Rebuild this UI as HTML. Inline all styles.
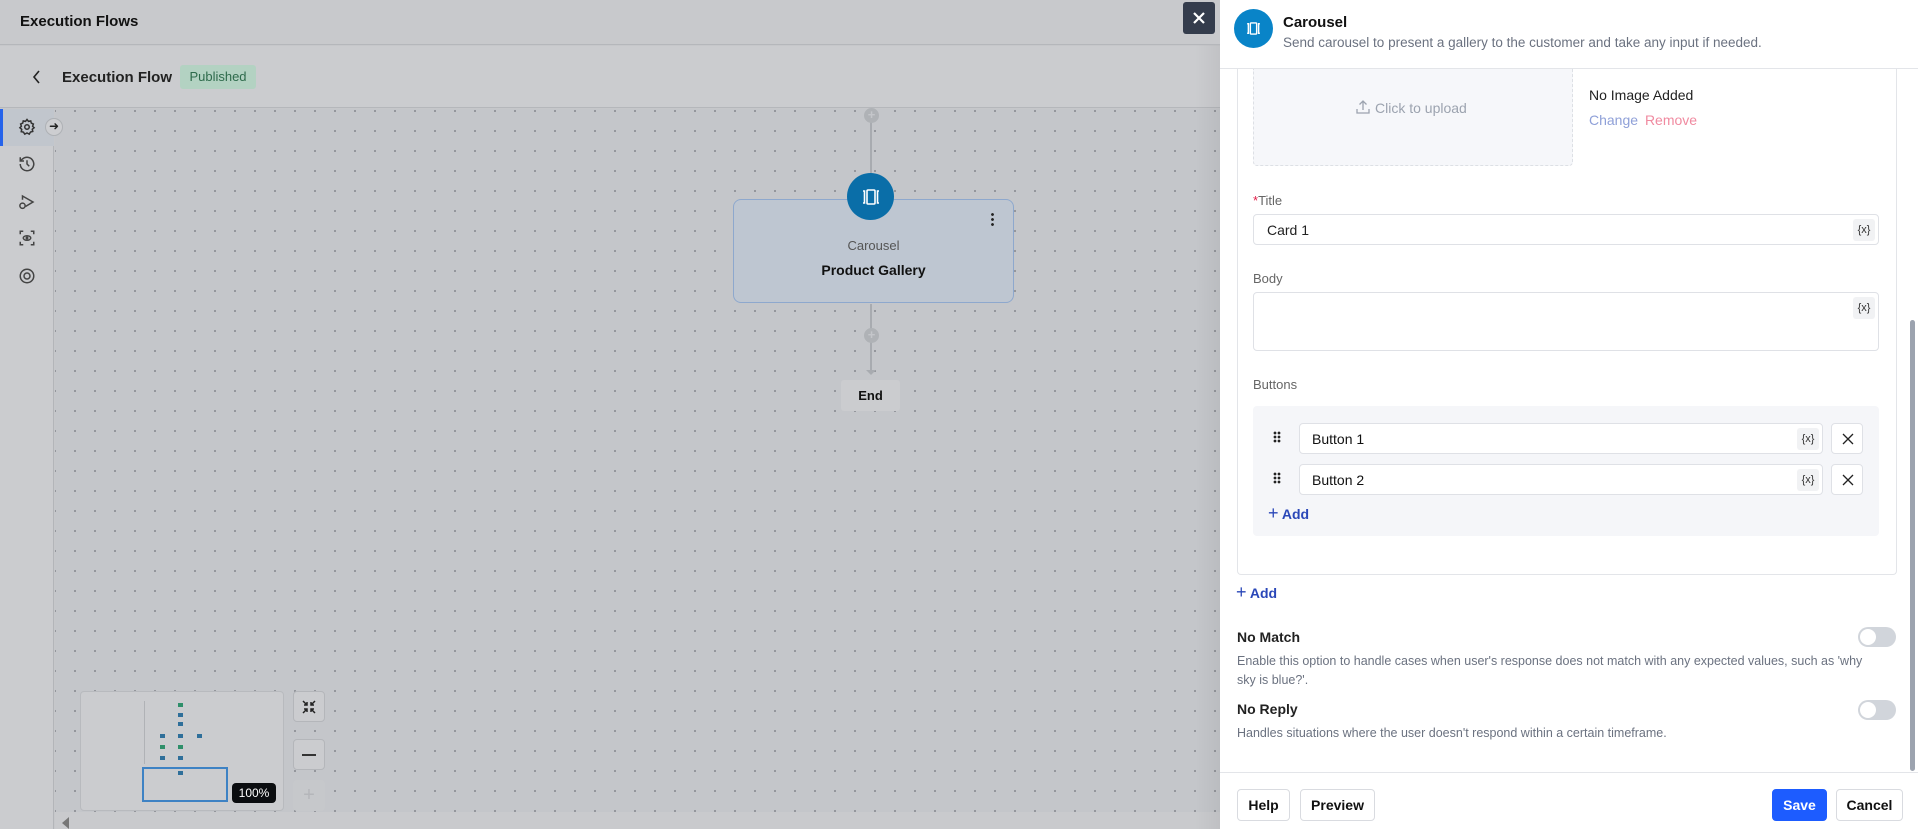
<!DOCTYPE html>
<html><head><meta charset="utf-8"><style>
*{box-sizing:border-box;margin:0;padding:0}
body{width:1918px;height:829px;overflow:hidden;font-family:"Liberation Sans",sans-serif;background:#c6c7ca;position:relative;color:#111}
.a{position:absolute}
.hdr{left:0;top:0;width:1220px;height:45px;background:#c8c9cc;border-bottom:1px solid #b5b7bb}
.bar{left:0;top:46px;width:1220px;height:62px;background:#cbcccf;border-bottom:1px solid #b5b7bb}
.side{left:0;top:109px;width:54px;height:720px;background:#cbcccf;border-right:1px solid #b3b5b9}
.canvas{left:55px;top:109px;width:1165px;height:703px;background-color:#c4c6ca;background-image:radial-gradient(circle,#8a8d93 0.8px,transparent 1.2px);background-size:20px 20px;background-position:10px -8px}
.panel{left:1220px;top:0;width:698px;height:829px;background:#fff}
.inp{border:1px solid #dfe1e6;border-radius:4px;background:#fff}
.vx{width:22px;height:22px;background:#f1f2f4;border-radius:3px;font-size:11px;text-align:center;line-height:22px;color:#333}
.btn{border:1px solid #d9dbe0;border-radius:4px;background:#fff;font-size:14px;font-weight:bold;text-align:center;line-height:30px;color:#111}
.tg{width:38px;height:20px;border-radius:10px;background:#d1d5db}
.tg:after{content:"";position:absolute;left:2px;top:2px;width:16px;height:16px;border-radius:50%;background:#fff}
.lbl{font-size:13px;color:#666}
.md{position:absolute;width:5px;height:4px;background:#2f6f9a}
</style></head><body>
<div class="a hdr"><div class="a" style="left:20px;top:13px;font-size:15px;font-weight:bold;color:#111">Execution Flows</div></div>
<div class="a bar">
 <svg class="a" style="left:31px;top:23px" width="12" height="16" viewBox="0 0 12 16"><path d="M8 2L3 8l5 6" stroke="#222" stroke-width="1.6" fill="none"/></svg>
 <div class="a" style="left:62px;top:23px;font-size:15px;font-weight:bold;color:#222">Execution Flow</div>
 <div class="a" style="left:180px;top:19px;width:76px;height:24px;background:#b3d2c2;border-radius:3px;font-size:13px;color:#2e6b4c;text-align:center;line-height:23px">Published</div>
</div>
<div class="a side">
 <div class="a" style="left:0;top:0;width:54px;height:37px;background:#c1c6cd;border-left:3px solid #2563eb"></div>
 <svg class="a" style="left:18px;top:9px" width="18" height="18" viewBox="0 0 24 24" fill="none" stroke="#333" stroke-width="2"><circle cx="12" cy="12" r="3"/><path d="M12 2l2 2.5 3-.7.7 3L20.5 8 19.5 11l2 2-2.5 2 .7 3-3 .7L15 21.5 12 20l-3 1.5-1.7-2.6-3-.7.7-3L2.5 13l2-2-1-3 2.8-1.2.7-3 3 .7z"/></svg>
 <svg class="a" style="left:18px;top:46px" width="18" height="18" viewBox="0 0 24 24" fill="none" stroke="#444" stroke-width="2"><path d="M3 12a9 9 0 1 0 3-6.7L3 8M3 3v5h5M12 7v5l3 3"/></svg>
 <svg class="a" style="left:18px;top:84px" width="18" height="18" viewBox="0 0 24 24" fill="none" stroke="#444" stroke-width="2"><path d="M6 9V4l14 8-10 6"/><circle cx="6" cy="17" r="3.5"/></svg>
 <svg class="a" style="left:18px;top:120px" width="18" height="18" viewBox="0 0 24 24" fill="none" stroke="#444" stroke-width="2"><path d="M3 7V3h4M17 3h4v4M21 17v4h-4M7 21H3v-4"/><ellipse cx="12" cy="12" rx="5" ry="3"/><circle cx="12" cy="12" r="1"/></svg>
 <svg class="a" style="left:18px;top:158px" width="18" height="18" viewBox="0 0 24 24" fill="none" stroke="#444" stroke-width="2"><circle cx="12" cy="12" r="9"/><circle cx="12" cy="12" r="4"/></svg>
</div>
<div class="a canvas"></div>
<div class="a" style="left:45px;top:118px;width:18px;height:18px;border-radius:50%;background:#cdced1;border:1px solid #aeb1b5;font-size:12px;line-height:15px;text-align:center;color:#222">➜</div>
<!-- flow -->
<div class="a" style="left:870px;top:109px;width:2px;height:65px;background:#a8abb0"></div>
<div class="a" style="left:864px;top:108px;width:15px;height:15px;border-radius:50%;background:#afb2b6;color:#c4c6ca;font-size:13px;line-height:14px;text-align:center;font-weight:bold">+</div>
<div class="a" style="left:733px;top:199px;width:281px;height:104px;background:#bec6d1;border:1.5px solid #8ea8cd;border-radius:8px"></div>
<div class="a" style="left:847px;top:173px;width:47px;height:47px;border-radius:50%;background:#0a6ea8"></div>
<svg class="a" style="left:859px;top:185px" width="24" height="24" viewBox="0 0 24 24" fill="none" stroke="#fff" stroke-width="1.6"><rect x="8" y="5" width="8" height="14" rx="1"/><path d="M4 6h1.5v12H4M20 6h-1.5v12H20"/></svg>
<div class="a" style="left:991px;top:212px;width:3px;height:14px;background:radial-gradient(circle,#222 1.2px,transparent 1.6px);background-size:3px 5px"></div>
<div class="a" style="left:733px;top:238px;width:281px;text-align:center;font-size:13px;color:#555">Carousel</div>
<div class="a" style="left:733px;top:262px;width:281px;text-align:center;font-size:14px;font-weight:bold;color:#111">Product Gallery</div>
<div class="a" style="left:870px;top:304px;width:2px;height:70px;background:#a8abb0"></div>
<div class="a" style="left:864px;top:328px;width:15px;height:15px;border-radius:50%;background:#afb2b6;color:#c4c6ca;font-size:13px;line-height:14px;text-align:center;font-weight:bold">+</div>
<div class="a" style="left:866px;top:370px;width:0;height:0;border-left:5px solid transparent;border-right:5px solid transparent;border-top:5px solid #a8abb0"></div>
<div class="a" style="left:841px;top:380px;width:59px;height:31px;background:#cbcccf;border-radius:3px;font-size:13px;font-weight:bold;text-align:center;line-height:31px">End</div>
<!-- minimap -->
<div class="a" style="left:80px;top:691px;width:204px;height:120px;background:#cbcccf;border:1px solid #b8babe;border-radius:4px"></div>
<div class="a" style="left:144px;top:701px;width:1px;height:63px;background:#b0b2b6"></div>
<div class="md" style="left:178px;top:703px;background:#2f8f6a"></div>
<div class="md" style="left:178px;top:713px"></div>
<div class="md" style="left:178px;top:722px"></div>
<div class="md" style="left:160px;top:734px"></div><div class="md" style="left:178px;top:734px"></div><div class="md" style="left:197px;top:734px"></div>
<div class="md" style="left:160px;top:745px;background:#2f8f6a"></div><div class="md" style="left:178px;top:745px;background:#2f8f6a"></div>
<div class="md" style="left:160px;top:756px"></div><div class="md" style="left:178px;top:756px"></div>
<div class="md" style="left:178px;top:771px"></div>
<div class="a" style="left:142px;top:767px;width:86px;height:35px;border:2px solid #3e82c4"></div>
<div class="a" style="left:232px;top:783px;width:44px;height:20px;background:#0b0d10;border-radius:4px;color:#fff;font-size:12px;text-align:center;line-height:20px">100%</div>
<div class="a" style="left:293px;top:691px;width:32px;height:31px;background:#cbcccf;border:1px solid #b4b6ba;border-radius:4px"><svg class="a" style="left:7px;top:7px" width="16" height="16" viewBox="0 0 16 16" stroke="#222" stroke-width="1.5" fill="none"><path d="M2 2l4 4M6 3v3H3M14 2l-4 4M10 3v3h3M2 14l4-4M3 10h3v3M14 14l-4-4M13 10h-3v3"/></svg></div>
<div class="a" style="left:293px;top:739px;width:32px;height:31px;background:#cbcccf;border:1px solid #b4b6ba;border-radius:4px"><div class="a" style="left:8px;top:14px;width:14px;height:2px;background:#333"></div></div>
<div class="a" style="left:293px;top:780px;width:32px;height:31px;background:#c6c8cb;border-radius:4px;font-size:20px;color:#b4b6ba;text-align:center;line-height:30px">+</div>
<div class="a" style="left:55px;top:812px;width:1165px;height:17px;background:#c9cacd"></div>
<div class="a" style="left:62px;top:817px;width:0;height:0;border-top:6px solid transparent;border-bottom:6px solid transparent;border-right:7px solid #777"></div>
<div class="a" style="left:1195px;top:45px;width:25px;height:784px;background:linear-gradient(90deg,rgba(0,0,0,0),rgba(0,0,0,0.05))"></div>
<!-- close -->
<div class="a" style="left:1183px;top:2px;width:32px;height:32px;background:#343c4c;border-radius:3px"><svg class="a" style="left:10px;top:10px" width="12" height="12" viewBox="0 0 12 12" stroke="#fff" stroke-width="2.2"><path d="M1 1l10 10M11 1L1 11"/></svg></div>
<!-- panel -->
<div class="a panel">
 <div class="a" style="left:14px;top:9px;width:39px;height:39px;border-radius:50%;background:#0984c8"></div>
 <svg class="a" style="left:24px;top:19px" width="19" height="19" viewBox="0 0 24 24" fill="none" stroke="#fff" stroke-width="1.8"><rect x="8" y="5" width="8" height="14" rx="1"/><path d="M4 6h1.5v12H4M20 6h-1.5v12H20"/></svg>
 <div class="a" style="left:63px;top:14px;font-size:15px;font-weight:bold">Carousel</div>
 <div class="a" style="left:63px;top:35px;font-size:13.5px;color:#6b7280">Send carousel to present a gallery to the customer and take any input if needed.</div>
 <div class="a" style="left:0;top:68px;width:698px;height:1px;background:#e3e5e9"></div>
 <div class="a" style="left:17px;top:69px;width:660px;height:506px;border:1px solid #e3e5e9;border-top:none;border-radius:0 0 4px 4px"></div>
 <div class="a" style="left:33px;top:69px;width:320px;height:97px;background:#f6f7fa;border:1px dashed #dde0e5;border-top:none;border-radius:0 0 4px 4px"></div>
 <svg class="a" style="left:136px;top:100px" width="14" height="14" viewBox="0 0 14 14" fill="none" stroke="#9ca3af" stroke-width="1.3"><path d="M7 10V1M3.5 4.5L7 1l3.5 3.5M1 9v4h12V9"/></svg>
 <div class="a" style="left:155px;top:100px;font-size:14px;color:#9ca3af">Click to upload</div>
 <div class="a" style="left:369px;top:87px;font-size:14px;color:#222">No Image Added</div>
 <div class="a" style="left:369px;top:112px;font-size:14px;color:#8fa0d8">Change <span style="color:#f08aa0;margin-left:3px">Remove</span></div>
 <div class="a lbl" style="left:33px;top:193px"><span style="color:#e11d48">*</span>Title</div>
 <div class="a inp" style="left:33px;top:214px;width:626px;height:31px"><div class="a" style="left:13px;top:7px;font-size:14px;color:#222">Card 1</div><div class="a vx" style="right:3px;top:4px">{x}</div></div>
 <div class="a lbl" style="left:33px;top:271px">Body</div>
 <div class="a inp" style="left:33px;top:292px;width:626px;height:59px"><div class="a vx" style="right:3px;top:4px">{x}</div></div>
 <div class="a lbl" style="left:33px;top:377px">Buttons</div>
 <div class="a" style="left:33px;top:406px;width:626px;height:130px;background:#f5f6f9;border-radius:4px">
  <div class="a" style="left:20px;top:25px;width:8px;height:12px;background:radial-gradient(circle,#222 1.2px,transparent 1.6px);background-size:4px 4px"></div>
  <div class="a inp" style="left:46px;top:17px;width:524px;height:31px"><div class="a" style="left:12px;top:7px;font-size:14px">Button 1</div><div class="a vx" style="right:3px;top:4px">{x}</div></div>
  <div class="a inp" style="left:578px;top:17px;width:32px;height:31px"><svg class="a" style="left:10px;top:9px" width="12" height="12" viewBox="0 0 12 12" stroke="#222" stroke-width="1.3"><path d="M1 1l10 10M11 1L1 11"/></svg></div>
  <div class="a" style="left:20px;top:66px;width:8px;height:12px;background:radial-gradient(circle,#222 1.2px,transparent 1.6px);background-size:4px 4px"></div>
  <div class="a inp" style="left:46px;top:58px;width:524px;height:31px"><div class="a" style="left:12px;top:7px;font-size:14px">Button 2</div><div class="a vx" style="right:3px;top:4px">{x}</div></div>
  <div class="a inp" style="left:578px;top:58px;width:32px;height:31px"><svg class="a" style="left:10px;top:9px" width="12" height="12" viewBox="0 0 12 12" stroke="#222" stroke-width="1.3"><path d="M1 1l10 10M11 1L1 11"/></svg></div>
  <div class="a" style="left:15px;top:97px;font-size:14px;font-weight:bold;color:#2a47b8"><span style="font-size:18px;font-weight:normal">+</span> Add</div>
 </div>
 <div class="a" style="left:16px;top:582px;font-size:14px;font-weight:bold;color:#2a47b8"><span style="font-size:18px;font-weight:normal">+</span> Add</div>
 <div class="a" style="left:17px;top:629px;font-size:14px;font-weight:bold;color:#222">No Match</div>
 <div class="a tg" style="left:638px;top:627px"></div>
 <div class="a" style="left:17px;top:652px;width:640px;font-size:12.5px;line-height:19px;color:#6b7280">Enable this option to handle cases when user's response does not match with any expected values, such as 'why sky is blue?'.</div>
 <div class="a" style="left:17px;top:701px;font-size:14px;font-weight:bold;color:#222">No Reply</div>
 <div class="a tg" style="left:638px;top:700px"></div>
 <div class="a" style="left:17px;top:726px;font-size:12.5px;color:#6b7280">Handles situations where the user doesn't respond within a certain timeframe.</div>
 <div class="a" style="left:0;top:772px;width:698px;height:1px;background:#e3e5e9"></div>
 <div class="a" style="left:690px;top:320px;width:5px;height:451px;background:#9ca3af;border-radius:3px"></div>
 <div class="a btn" style="left:17px;top:789px;width:53px;height:32px">Help</div>
 <div class="a btn" style="left:80px;top:789px;width:75px;height:32px">Preview</div>
 <div class="a btn" style="left:552px;top:789px;width:55px;height:32px;background:#1d5cff;border-color:#1d5cff;color:#fff">Save</div>
 <div class="a btn" style="left:616px;top:789px;width:67px;height:32px">Cancel</div>
</div>
</body></html>
